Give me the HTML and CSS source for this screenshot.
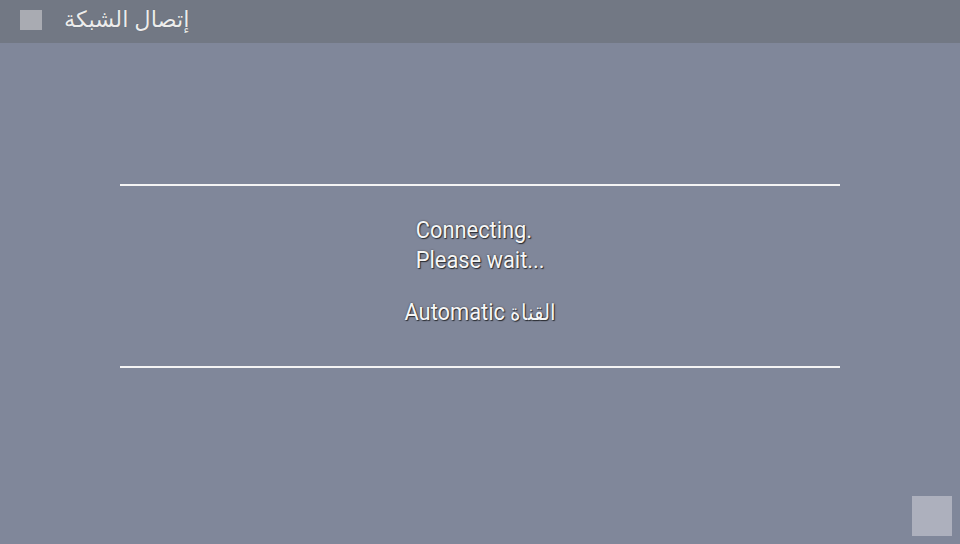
FILE: index.html
```html
<!DOCTYPE html>
<html lang="ar">
<head>
<meta charset="utf-8">
<link rel="stylesheet" href="styles.css">
</head>
<body>
<div class="screen">
  <header class="topbar" dir="ltr">
    <span class="sq"></span>
    <span class="title" dir="rtl">إتصال الشبكة</span>
  </header>
  <main class="content">
    <div class="panel">
      <div class="msg">
        <div class="block">Connecting.<br>Please wait...</div>
        <div class="chan" dir="ltr">Automatic <span class="ar" dir="rtl">القناة</span></div>
      </div>
    </div>
  </main>
  <div class="corner"></div>
</div>
</body>
</html>
```
FILE: styles.css
```css
html, body { margin: 0; padding: 0; }
body { width: 960px; height: 544px; overflow: hidden; background: #80879a; font-family: Roboto, "Noto Sans", sans-serif; }
.screen { width: 960px; height: 544px; display: flex; flex-direction: column; position: relative; }
.topbar { height: 43px; background: #727884; display: flex; align-items: center; padding-left: 20px; gap: 22px; flex-shrink: 0; }
.sq { width: 22px; height: 20px; background: #a9abb2; margin-top: -3px; }
.title { color: #ececec; font-family: "Noto Sans", "DejaVu Sans", sans-serif; font-size: 22.5px; line-height: 1; margin-top: -5px; text-shadow: 0 0 1px rgba(0,0,0,0.3); }
.content { flex: 1; display: flex; flex-direction: column; align-items: center; padding-top: 141px; }
.panel { width: 720px; height: 180px; border-top: 2px solid #f4f4f4; border-bottom: 2px solid #f4f4f4; display: flex; justify-content: center; }
.msg { display: flex; flex-direction: column; align-items: center; padding-top: 29px; color: #f6f6f6; font-size: 24px; text-shadow: 1px 1px 1px #2a2d33, 0 0 2px rgba(0,0,0,0.5); transform: scaleX(0.91); }
.block { text-align: left; line-height: 30px; }
.chan { margin-top: 22px; line-height: 30px; }
.ar { font-size: 22px; }
.corner { position: absolute; right: 8px; bottom: 8px; width: 40px; height: 40px; background: #adb0bd; }
```
